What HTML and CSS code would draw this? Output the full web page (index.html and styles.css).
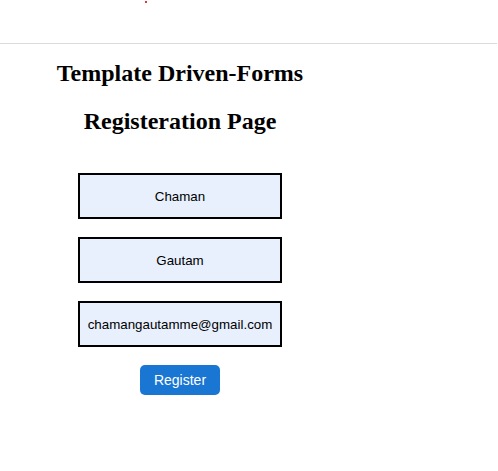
FILE: index.html
```html
<!DOCTYPE html>
<html>
<head>
<meta charset="utf-8">
<link rel="stylesheet" href="styles.css">
</head>
<body>
<div class="topbar"><span class="dot"></span></div>
<main class="page">
  <h2 class="title">Template Driven-Forms</h2>
  <h2 class="title second">Registeration Page</h2>
  <form class="form">
    <input class="field" type="text" value="Chaman">
    <input class="field" type="text" value="Gautam">
    <input class="field" type="email" value="chamangautamme@gmail.com">
    <button class="btn" type="button">Register</button>
  </form>
</main>
</body>
</html>
```
FILE: styles.css
```css
html, body {
  margin: 0;
  padding: 0;
  background: #fff;
}
.topbar {
  height: 44px;
  border-bottom: 1px solid #dcdcdc;
  width: 497px;
  box-sizing: border-box;
  padding-left: 145px;
  padding-top: 1px;
}
.dot {
  display: block;
  width: 2px;
  height: 2px;
  background: #e23a3a;
}
.page {
  width: 360px;
  text-align: center;
}
.title {
  font-family: "Liberation Serif", serif;
  font-weight: bold;
  font-size: 24px;
  line-height: 28px;
  color: #000;
  margin: 15px 0 0 0;
}
.title.second {
  margin-top: 20px;
}
.form {
  display: flex;
  flex-direction: column;
  align-items: center;
  gap: 18px;
  margin-top: 38px;
}
.field {
  box-sizing: border-box;
  width: 204px;
  height: 46px;
  border: 2px solid #000;
  background: #e8f0fe;
  text-align: center;
  font-family: "Liberation Sans", Arial, sans-serif;
  font-size: 13.33px;
  color: #000;
  padding: 0;
  margin: 0;
  outline: none;
}
.btn {
  width: 80px;
  height: 30px;
  border: none;
  border-radius: 5px;
  background: #1976d2;
  color: #fff;
  font-family: "Liberation Sans", Arial, sans-serif;
  font-size: 14px;
  padding: 0;
  margin: 0;
}
```
